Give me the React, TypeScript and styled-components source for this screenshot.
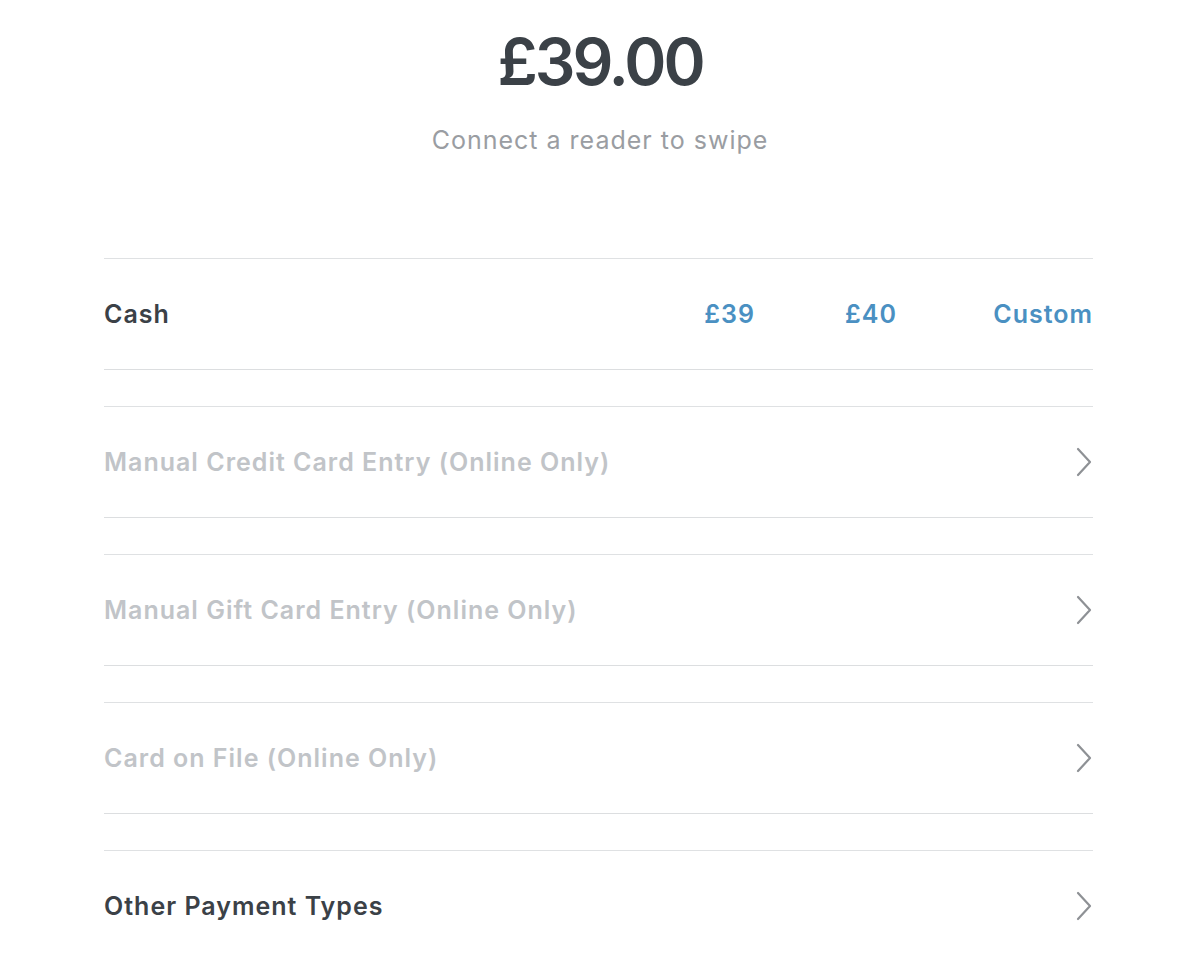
import React from "react";
import styled, { createGlobalStyle } from "styled-components";

const Global = createGlobalStyle`
  html, body { margin: 0; padding: 0; background: #fff; }
  body { font-family: Inter, "Noto Sans", "Liberation Sans", sans-serif; -webkit-font-smoothing: antialiased; }
`;

const Page = styled.div`
  width: 1200px;
  height: 961px;
  overflow: hidden;
  display: flex;
  flex-direction: column;
  background: #fff;
`;

const Header = styled.header`
  display: flex;
  flex-direction: column;
  align-items: center;
  flex-shrink: 0;
  padding-top: 22px;
  height: 258px;
  box-sizing: border-box;
`;

const Amount = styled.h1`
  margin: 0;
  font-size: 64px;
  line-height: 80px;
  font-weight: 600;
  color: #3b4147;
  letter-spacing: -3px;
`;

const Subtitle = styled.p`
  margin: 20px 0 0;
  font-size: 25px;
  line-height: 36px;
  color: #9a9da2;
  font-weight: 400;
  letter-spacing: 1px;
`;

const List = styled.div`
  display: flex;
  flex-direction: column;
  flex-shrink: 0;
  gap: 36px;
  padding: 0 107px 0 104px;
`;

const Row = styled.div`
  height: 112px;
  box-sizing: border-box;
  flex-shrink: 0;
  display: flex;
  align-items: center;
  justify-content: space-between;
  border-top: 1px solid #dfe1e3;
  border-bottom: 1px solid #dcdee0;
`;

const Label = styled.span<{ $disabled?: boolean }>`
  font-size: 25px;
  font-weight: 600;
  letter-spacing: 1px;
  color: ${(p) => (p.$disabled ? "#c1c4c8" : "#3b4147")};
`;

const Options = styled.div`
  display: flex;
  align-items: center;
`;

const Option = styled.button<{ $w: number }>`
  border: 0;
  background: none;
  padding: 0;
  font-family: inherit;
  font-size: 25px;
  font-weight: 600;
  letter-spacing: 1px;
  color: #4a90c2;
  text-align: right;
  width: ${(p) => p.$w}px;
`;

const Chevron = () => (
  <svg width="18" height="30" viewBox="0 0 18 30" fill="none">
    <path d="M3 2 L15 15 L3 28" stroke="#8e9195" strokeWidth="2.2" strokeLinecap="round" strokeLinejoin="round" />
  </svg>
);

const items = [
  { label: "Manual Credit Card Entry (Online Only)", disabled: true },
  { label: "Manual Gift Card Entry (Online Only)", disabled: true },
  { label: "Card on File (Online Only)", disabled: true },
  { label: "Other Payment Types", disabled: false },
];

export default function App() {
  return (
    <Page>
      <Global />
      <Header>
        <Amount>£39.00</Amount>
        <Subtitle>Connect a reader to swipe</Subtitle>
      </Header>
      <List>
        <Row>
          <Label>Cash</Label>
          <Options>
            <Option $w={60}>£39</Option>
            <Option $w={142}>£40</Option>
            <Option $w={196}>Custom</Option>
          </Options>
        </Row>
        {items.map((it) => (
          <Row key={it.label}>
            <Label $disabled={it.disabled}>{it.label}</Label>
            <Chevron />
          </Row>
        ))}
      </List>
    </Page>
  );
}
